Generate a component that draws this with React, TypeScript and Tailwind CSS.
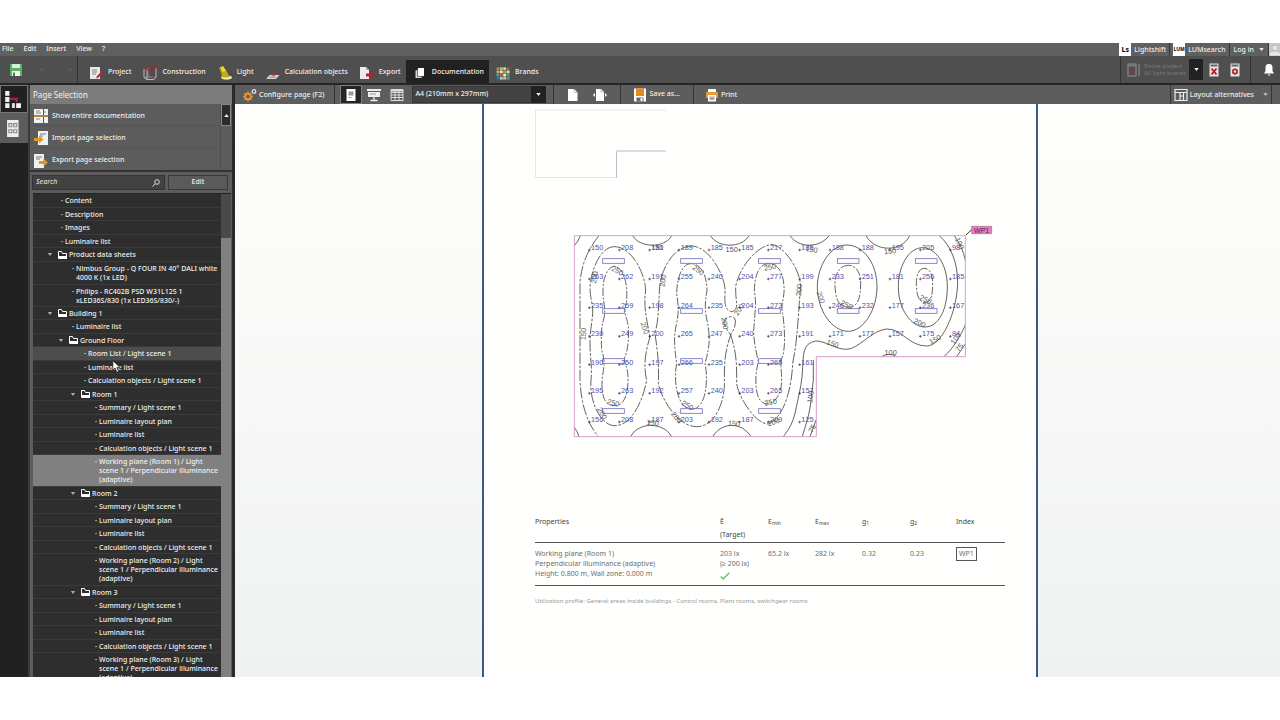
import type { ReactNode } from "react";
import { clsx } from "clsx";

interface TreeRow {
  label: string;
  level: number;
  folder?: boolean;
  lines?: 2 | 3;
  state?: "hover" | "selected";
}

const roomRows = (n: number, selected = false): TreeRow[] => [
  { label: `Room ${n}`, level: 3, folder: true },
  { label: "Summary / Light scene 1", level: 4 },
  { label: "Luminaire layout plan", level: 4 },
  { label: "Luminaire list", level: 4 },
  { label: "Calculation objects / Light scene 1", level: 4 },
  {
    label: `Working plane (Room ${n}) / Light scene 1 / Perpendicular illuminance (adaptive)`,
    level: 4,
    lines: 3,
    state: selected ? "selected" : undefined,
  },
];

const tree: TreeRow[] = [
  { label: "Content", level: 1 },
  { label: "Description", level: 1 },
  { label: "Images", level: 1 },
  { label: "Luminaire list", level: 1 },
  { label: "Product data sheets", level: 1, folder: true },
  { label: "Nimbus Group - Q FOUR IN 40° DALI white 4000 K (1x LED)", level: 2, lines: 2 },
  { label: "Philips - RC402B PSD W31L125 1 xLED36S/830 (1x LED36S/830/-)", level: 2, lines: 2 },
  { label: "Building 1", level: 1, folder: true },
  { label: "Luminaire list", level: 2 },
  { label: "Ground Floor", level: 2, folder: true },
  { label: "Room List / Light scene 1", level: 3, state: "hover" },
  { label: "Luminaire list", level: 3 },
  { label: "Calculation objects / Light scene 1", level: 3 },
  ...roomRows(1, true),
  ...roomRows(2),
  ...roomRows(3),
];

const leafIndent: Record<number, string> = {
  1: "pl-[28px]",
  2: "pl-[39px]",
  3: "pl-[51px]",
  4: "pl-[62px]",
};

const folderIndent: Record<number, string> = {
  1: "pl-[14px]",
  2: "pl-[25px]",
  3: "pl-[37px]",
};

const rowHeight = { 1: "h-[14px] even:h-[13px]", 2: "h-[22px] even:h-[23px]", 3: "h-[32px]" };

function Icon({ children, className = "h-[14px] w-[14px]" }: { children: ReactNode; className?: string }) {
  return (
    <svg viewBox="0 0 14 14" className={clsx("shrink-0", className)} aria-hidden="true">
      {children}
    </svg>
  );
}

function ArrowDown({ className = "w-[5px]" }: { className?: string }) {
  return (
    <svg viewBox="0 0 6 4" className={clsx("h-[3px] shrink-0", className)} aria-hidden="true">
      <path d="M0 0h6L3 4z" fill="currentColor" />
    </svg>
  );
}

function Divider() {
  return <span className="w-px self-stretch bg-[#333]" />;
}

const ProjectIcon = () => (
  <Icon>
    <path d="M1 1h10v12H1z" fill="#e9e9e9" />
    <path d="M3 4h5M3 6h5M3 8h4" stroke="#777" strokeWidth=".9" />
    <path d="M13.500 4.500 8 10l-1 2.500 2.500-1L14 7z" fill="#c0202e" />
  </Icon>
);

const ConstructionIcon = () => (
  <Icon>
    <path d="M1 2.500v9l3 2V4.500zM4 13.500h7l2-2.500V2" fill="none" stroke="#c9c9c9" strokeWidth=".9" />
    <path d="M5 2v9h8M1 11.500 5 11" fill="none" stroke="#a5a5a5" strokeWidth=".7" />
    <path d="M1 2.500 5 1h8l-2.500 3H4zM10.500 4v9" fill="none" stroke="#b0202c" strokeWidth="1.100" />
  </Icon>
);

const LightIcon = () => (
  <Icon>
    <ellipse cx="8.500" cy="11.500" rx="5.500" ry="2" fill="#fbf5ba" />
    <path d="M3 6 8 4l4 7.500H4z" fill="#bfae18" />
    <path d="M1 2 5 0l3 4.500-5 2.500z" fill="#e6dc25" />
    <path d="m1 2 2 5 1-.5L2 1.500z" fill="#777112" />
  </Icon>
);

const CalculationIcon = () => (
  <Icon>
    <path d="M3.500 9h10L10 13H0z" fill="#cfcfcf" />
    <path d="M4 11h6" stroke="#8d8d8d" />
    <path d="M7.500 2v7M5.500 7.500l2 2 2-2" fill="none" stroke="#b22633" strokeWidth="1.200" />
  </Icon>
);

const ExportIcon = () => (
  <Icon>
    <path d="M0 1h6l3 3v9H0z" fill="#ececec" />
    <path d="M6 1v3h3" fill="#aaa" />
    <path d="M6 7.500h3.500V5l4.500 4-4.500 4v-2.500H6z" fill="#bb1c2b" />
  </Icon>
);

const DocumentationIcon = () => (
  <Icon>
    <path d="M5 2h6v8H5z" fill="#fff" />
    <path d="M2.500 4.500 4.500 4v6.500h4V12h-6z" fill="#d8d8d8" />
    <path d="M4.700 2v8.400h6" fill="none" stroke="#777" strokeWidth=".5" />
  </Icon>
);

const brandColors = [
  "#8b8b8b", "#b8c460", "#d8cf9a", "#cf4d3c",
  "#e2a33a", "#f0e6b5", "#6eb3a4", "#eee08d",
  "#4aa3c7", "#d15a45", "#f3f0d8", "#5e9e6a",
  "#3a6f9f", "#9bd0df", "#e3bf36", "#3fa7b4",
];

const BrandsIcon = () => (
  <Icon>
    <path d="M0 1h14v13H0z" fill="#444" />
    {brandColors.map((c, i) => (
      <rect key={c} x={0.4 + (i % 4) * 3.4} y={1.3 + Math.floor(i / 4) * 3.2} width="3" height="2.800" fill={c} />
    ))}
  </Icon>
);

const modes = [
  { label: "Project", icon: <ProjectIcon /> },
  { label: "Construction", icon: <ConstructionIcon /> },
  { label: "Light", icon: <LightIcon /> },
  { label: "Calculation objects", icon: <CalculationIcon /> },
  { label: "Export", icon: <ExportIcon /> },
  { label: "Documentation", icon: <DocumentationIcon />, active: true },
  { label: "Brands", icon: <BrandsIcon /> },
];

function MenuBar() {
  return (
    <div className="flex h-[13px] items-stretch justify-between bg-[#606060] text-[7px] leading-[11px] font-medium">
      <nav className="flex gap-[10px] pl-[2px]">
        {["File", "Edit", "Insert", "View", "?"].map((m) => (
          <button key={m} className="pb-[2px]">{m}</button>
        ))}
      </nav>
      <div className="flex items-stretch">
        <button className="flex items-center gap-[3px] pr-[3px]">
          <span className="flex h-full w-[12px] items-center justify-center bg-white font-bold text-black">Ls</span>
          Lightshift
        </button>
        <Divider />
        <button className="flex items-center gap-[3px] px-[3px]">
          <span className="flex h-full w-[12px] items-center justify-center bg-white text-[5px] font-bold text-black">LUM</span>
          LUMsearch
        </button>
        <Divider />
        <button className="flex items-center gap-[5px] px-[4px]">
          Log in
          <ArrowDown />
        </button>
        <Divider />
        <button aria-label="Account" className="w-[11px] bg-[#c9c9c9]">
          <svg viewBox="0 0 11 13" className="h-[13px] w-[11px]">
            <circle cx="6" cy="5" r="3" fill="#e6e6e6" stroke="#aaa" strokeWidth=".6" />
            <path d="M0 13c0-4 3-5 6-5s6 1 6 5z" fill="#e6e6e6" stroke="#aaa" strokeWidth=".6" />
          </svg>
        </button>
      </div>
    </div>
  );
}

function ModeBar() {
  return (
    <div className="flex h-[29px] items-stretch border-b-2 border-[#252525] bg-[#4f4f4f] text-[7px]">
      <div className="flex w-[78px] items-center gap-[16px] border-r border-[#333] pl-[9px]">
        <button aria-label="Save">
          <Icon>
            <path d="M1 1h12v12H1z" fill="#57b35f" />
            <path d="M3 1h8v4H3z" fill="#d9efdb" />
            <path d="M3 8h8v5H3z" fill="#f4f4f4" />
            <path d="M4 9.500h2V13H4z" fill="#4b7c50" />
          </Icon>
        </button>
        <button aria-label="Undo" className="text-[#4b6350]">
          <svg viewBox="0 0 6 6" className="h-[5px] w-[5px]"><path d="M0 3 4 0v2h2v2H4v2z" fill="currentColor" /></svg>
        </button>
        <button aria-label="Redo" className="ml-[8px] text-[#4b6350]">
          <svg viewBox="0 0 6 6" className="h-[5px] w-[5px]"><path d="M6 3 2 0v2H0v2h2v2z" fill="currentColor" /></svg>
        </button>
      </div>
      <nav className="flex items-stretch pt-[4px] pl-[4px]">
        {modes.map((m) => (
          <button
            key={m.label}
            className={clsx("flex items-center gap-[5px] pt-[2px] pr-[5px] pl-[7px] font-medium", m.active && "bg-[#212121]")}
          >
            {m.icon}
            {m.label}
          </button>
        ))}
      </nav>
      <div className="ml-auto flex items-stretch border-l border-[#333]">
        <button className="flex items-center gap-[3px] pr-[3px] pl-[6px] text-left text-[6px] leading-[7px] text-[#7b7b7b]">
          <Icon>
            <path d="M1 1h8v12H1zM12 1v12" fill="none" stroke="#7d7d7d" strokeWidth="1.500" />
            <path d="M1 2.500h8" stroke="#7d7d7d" strokeWidth="2" />
            <path d="m3.500 5 4 3-4 3z" fill="#7a3d43" />
          </Icon>
          <span>Entire project<br />All light scenes</span>
        </button>
        <button aria-label="Calculation options" className="my-[3px] flex w-[14px] items-center justify-center bg-[#222]">
          <ArrowDown />
        </button>
        <button aria-label="Delete results" className="pl-[4px]">
          <Icon>
            <path d="M2.500.5h9v13h-9z" fill="#e4e4e4" />
            <path d="M3.500 1.500h7v2h-7z" fill="#56716e" />
            <path d="m4.500 5.500 5 6M9.500 5.500l-5 6" stroke="#bd1830" strokeWidth="1.900" />
          </Icon>
        </button>
        <button aria-label="Calculation settings" className="pr-[8px] pl-[7px]">
          <Icon>
            <path d="M2.500.5h9v13h-9z" fill="#e4e4e4" />
            <path d="M3.500 1.500h7v2h-7z" fill="#56716e" />
            <circle cx="7" cy="8.500" r="2" fill="none" stroke="#bd1830" strokeWidth="1.700" />
            <path d="M7 5v7M4 6.800l6 3.400M10 6.800l-6 3.400" stroke="#bd1830" strokeWidth="1" />
            <circle cx="7" cy="8.500" r="1.200" fill="#e4e4e4" />
          </Icon>
        </button>
        <Divider />
        <button aria-label="Notifications" className="pr-[4px] pl-[11px]">
          <Icon>
            <path d="M7 1c3 0 3.500 2 3.500 4v3l1.500 2.500H2L3.500 8V5C3.500 3 4 1 7 1z" fill="#fff" />
            <path d="M5.500 11.500h3L7 13z" fill="#fff" />
          </Icon>
        </button>
      </div>
    </div>
  );
}

const actions = [
  {
    label: "Show entire documentation",
    icon: (
      <>
        <path d="M0 0h9v6H0zM10 0h4v6h-4zM0 8h9v6H0zM10 8h4v6h-4z" fill="#f1f1f1" />
        <path d="M2 2h4M2 4h5M2 10h4M11 2v2" stroke="#888" />
        <path d="M0 7h14" stroke="#dc9a2c" strokeWidth="1.300" />
      </>
    ),
  },
  {
    label: "Import page selection",
    icon: (
      <>
        <path d="M4 0h10v14H4z" fill="#f1f1f1" />
        <path d="M6 3h6M6 5h3" stroke="#777" />
        <path d="M0 7h5V4.500L9.500 8.500 5 12.500V10H0z" fill="#e2951f" />
      </>
    ),
  },
  {
    label: "Export page selection",
    icon: (
      <>
        <path d="M0 0h10v14H0z" fill="#f1f1f1" />
        <path d="M2 3h6M2 5h4" stroke="#777" />
        <path d="M5 7h4.500V4.500L14 8.500 9.500 12.500V10H5z" fill="#e2951f" />
      </>
    ),
  },
];

function TreeItem({ row }: { row: TreeRow }) {
  return (
    <li
      className={clsx(
        "flex shrink-0 items-center border-b border-[#3b3b3b]",
        rowHeight[row.lines ?? 1],
        row.folder ? folderIndent[row.level] : leafIndent[row.level],
        row.state === "hover" && "bg-[#4d4d4d]",
        row.state === "selected" && "bg-[#808080]",
      )}
    >
      {row.folder ? (
        <button className="flex items-center">
          <ArrowDown className="mr-[5px] w-[6px] text-[#aaa]" />
          <svg viewBox="0 0 9 8" className="mr-[2px] h-[8px] w-[9px]" aria-hidden="true">
            <path d="M.5 7.500v-7h3l1 2h4v5z" fill="none" stroke="#fff" />
            <path d="M1 5h8v3H1z" fill="#fff" />
          </svg>
          {row.label}
        </button>
      ) : (
        <a href="#page" className="flex">
          <span className="w-[4px] shrink-0 font-bold">·</span>
          <span>{row.label}</span>
        </a>
      )}
    </li>
  );
}

function Sidebar() {
  return (
    <aside className="flex w-[205px] shrink-0 flex-col border-r-[3px] border-[#2a2a2a] bg-[#5c5c5c] text-[7px] font-medium">
      <h2 className="flex h-[19px] shrink-0 items-center bg-[#7c7c7c] pl-[3px] text-[8px] font-normal">Page Selection</h2>
      <div className="flex h-[68px] shrink-0 border-b-2 border-[#333]">
        <div className="flex-1">
          {actions.map((a) => (
            <button key={a.label} className="flex h-[22px] w-full items-center gap-[4px] border-b border-[#545454] pt-[3px] pl-[4px] last:border-b-0">
              <Icon>{a.icon}</Icon>
              {a.label}
            </button>
          ))}
        </div>
        <div className="mr-px w-[11px] border-l border-[#505050]">
          <button aria-label="Scroll up" className="flex h-[22px] w-full items-center justify-center border border-[#888] bg-[#2b2b2b]">
            <ArrowDown className="w-[5px] rotate-180" />
          </button>
        </div>
      </div>
      <div className="flex h-[21px] shrink-0 items-center gap-[3px] px-[2px]">
        <div className="flex h-[15px] flex-1 items-center border border-[#333] bg-[#424242] pr-[4px]">
          <input aria-label="Search" placeholder="Search" className="min-w-0 flex-1 bg-transparent pl-[3px] italic outline-none placeholder:text-[#ddd]" />
          <svg viewBox="0 0 8 8" className="h-[8px] w-[8px]" fill="none" stroke="#ddd" aria-hidden="true">
            <circle cx="5" cy="3" r="2.300" />
            <path d="M3.300 4.700.5 7.500" />
          </svg>
        </div>
        <button className="mr-[2px] h-[15px] w-[60px] border border-[#3a3a3a] bg-[#5a5a5a]">Edit</button>
      </div>
      <div className="mr-px ml-[3px] flex min-h-0 flex-1 border-t border-[#222] bg-[#2e2e2e]">
        <ul className="flex min-w-0 flex-1 flex-col overflow-hidden leading-[9px]">
          {tree.map((row, i) => (
            <TreeItem key={i} row={row} />
          ))}
        </ul>
        <div className="flex w-[10px] flex-col bg-[#4a4a4a]">
          <div className="mt-[44px] flex-1 bg-[#808080]" />
        </div>
      </div>
    </aside>
  );
}

function PageBar() {
  return (
    <div className="flex h-[19px] shrink-0 items-stretch bg-[#5d5d5d] text-[7px] font-medium">
      <button className="flex items-center gap-[2px] pr-[10px] pl-[8px] pt-px">
        <Icon>
          <circle cx="5" cy="8.500" r="2.800" fill="none" stroke="#e5952b" strokeWidth="2" />
          <path d="M5 3.500v2M5 11.500v2M0 8.500h2M8 8.500h2M1.500 5l1.500 1.500M7 10.500l1.500 1.500M8.500 5 7 6.500M3 10.500 1.500 12" stroke="#e5952b" strokeWidth="1.500" />
          <circle cx="11" cy="3.500" r="1.800" fill="none" stroke="#ddd" strokeWidth="1.300" />
        </Icon>
        Configure page (F2)
      </button>
      <Divider />
      <button aria-label="Page view" className="ml-[5px] flex w-[22px] items-center justify-center border border-[#808080] bg-[#252525]">
        <Icon>
          <path d="M2.500 1h9v12h-9z" fill="#fff" />
          <path d="M4.500 3.500h5v4h-5zM4.500 9h3v1h-3z" fill="#999" />
        </Icon>
      </button>
      <button aria-label="Presentation view" className="w-[23px] pl-[5px]">
        <Icon>
          <path d="M0 1h14v2H0zM1 4h12v5H1z" fill="#eee" />
          <path d="M3 6h6" stroke="#999" />
          <path d="M7 9v3M3.500 12.500h7" stroke="#eee" strokeWidth="1.300" />
        </Icon>
      </button>
      <button aria-label="Table view" className="w-[27px] pl-[5px]">
        <Icon>
          <path d="M1 1.500h12v11H1zM1 4.500h12M1 7h12M1 9.500h12M5 1.500v11M9 1.500v11" fill="none" stroke="#ddd" />
          <path d="M1 1.500h12v2H1z" fill="#ddd" />
        </Icon>
      </button>
      <div className="relative my-px flex w-[134px]">
        <select aria-label="Page size" className="w-full appearance-none border border-[#383838] bg-[#434343] pl-[2px] outline-none">
          <option>A4 (210mm x 297mm)</option>
        </select>
        <span className="pointer-events-none absolute inset-y-0 right-0 flex w-[15px] items-center justify-center bg-[#222]">
          <ArrowDown />
        </span>
      </div>
      <span className="w-[7px]" />
      <Divider />
      <button aria-label="Single page" className="pl-[12px]">
        <Icon>
          <path d="M2 1h6l3.500 3.500V13H2z" fill="#fff" />
          <path d="M8 1v3.500h3.500" fill="none" stroke="#aaa" strokeWidth=".7" />
        </Icon>
      </button>
      <button aria-label="Fit page" className="px-[13px]">
        <Icon>
          <path d="M3 1h5l3 3v9H3z" fill="#fff" />
          <path d="M8 1v3h3" fill="none" stroke="#aaa" strokeWidth=".7" />
          <path d="M2 5v4L0 7zM12 5v4l2-2z" fill="#fff" />
        </Icon>
      </button>
      <Divider />
      <button className="flex items-center gap-[2px] pr-[13px] pl-[12px]">
        <Icon>
          <path d="M1 .5h12v13H1z" fill="#fff" />
          <path d="M3 .5h8v7.500H3z" fill="#e58a1f" />
          <path d="M3.500 9.500h7v4h-7z" fill="#666" />
          <path d="M7.500 10h2v3h-2z" fill="#fff" />
        </Icon>
        Save as...
      </button>
      <Divider />
      <button className="flex items-center gap-[2px] pl-[11px] pt-px">
        <Icon>
          <path d="M3 1h8v3H3z" fill="#fff" />
          <path d="M1 4h12v6H1z" fill="#e59a35" />
          <path d="M3 7h8v6.500H3z" fill="#fff" />
          <path d="M4.500 8.500h5v3.500h-5z" fill="#aaa" />
        </Icon>
        Print
      </button>
      <div className="ml-auto flex">
        <Divider />
        <button className="flex items-center gap-[2px] pl-[3px] pt-px">
          <Icon>
            <path d="M1 1.500h12v11H1zM1 4.500h12M6 4.500v8M9.500 4.500v8M6 8h3.500" fill="none" stroke="#eee" strokeWidth="1.200" />
          </Icon>
          Layout alternatives
        </button>
        <button aria-label="More layouts" className="mr-px ml-[6px] w-[10px] text-[#bbb]">
          <ArrowDown className="mx-auto w-[5px]" />
        </button>
        <Divider />
        <span className="w-[8px]" />
      </div>
    </div>
  );
}

// Plan drawing, three units per pixel
const contours = [
  "M102 47Q50 110 45 190V480Q50 590 100 650",
  "M46 47Q40 65 28 77M28 622Q38 635 42 650",
  "M203 47C225 85 300 85 320 47M436 47C460 85 530 85 552 47M675 47C700 85 765 85 792 47M903 47C930 97 1010 97 1034 47",
  "M197 650C220 605 295 605 320 650M443 650C470 605 530 605 558 650M950 410Q972 396 995 410",
  "M148 80C110 80 80 140 75 200C75 240 85 250 83 280C80 320 75 330 75 370C75 420 82 430 78 480C72 540 105 617 150 617C200 617 235 540 245 480C235 440 240 400 255 350C245 300 235 260 242 210C240 160 200 80 148 80",
  "M380 78C330 78 290 140 284 200C280 250 283 290 270 340C275 380 283 420 280 490C290 540 340 620 395 620C450 620 475 550 478 500C478 430 478 400 497 345C480 320 465 300 490 292C505 285 515 295 510 315C508 330 500 335 497 345C515 400 515 430 515 490C520 530 570 612 610 612C660 590 680 500 683 430C700 350 700 260 707 200C705 140 650 75 620 73C570 80 520 150 512 200C510 240 525 270 500 275C475 270 480 240 480 210C480 170 435 80 380 78",
  "M1123 47C1160 80 1178 130 1178 190C1175 280 1130 378 1085 378C1030 378 1010 325 965 327C920 330 880 388 845 388C810 388 780 362 752 363C715 370 715 400 713 440C712 490 700 530 690 580C680 620 665 635 655 650",
  "M845 75C795 75 757 140 757 200C757 270 800 334 850 334C895 334 936 270 936 200C936 130 895 75 845 75",
  "M1073 83C1030 83 1000 140 1000 200C1000 270 1040 321 1080 321C1120 321 1147 270 1147 200C1147 130 1110 83 1073 83",
  "M745 420V480L738 540C735 580 720 620 712 650M735 650L753 600",
  "M1137 410C1165 385 1185 350 1201 315M1175 410L1201 372M1168 47Q1192 80 1201 120",
];

const innerContours = [
  "M150 139C125 139 112 180 114 220C115 250 122 262 118 290C108 320 108 350 110 390C120 420 118 440 112 470C108 520 115 557 148 557C180 557 190 520 189 470C188 440 178 430 178 415C190 390 192 350 190 320C185 290 178 285 180 265C190 240 190 150 150 139",
  "M378 131C345 131 335 190 335 220C340 260 342 270 335 310C325 350 328 380 335 430C325 480 335 565 380 568C425 565 430 480 420 430C435 380 435 350 428 310C418 270 420 250 426 210C425 160 405 131 378 131",
  "M612 131C580 131 568 170 568 215C575 250 570 270 567 320C562 350 575 400 580 425C568 470 570 530 590 545C610 565 650 540 650 480C650 450 645 440 650 415C662 390 660 330 653 280C645 260 660 230 657 200C655 160 640 131 612 131",
  "M850 136C825 136 810 160 810 190C810 230 818 262 850 262C880 262 887 230 887 190C887 160 875 136 850 136",
  "M1078 145C1062 145 1054 165 1054 190C1054 225 1062 248 1080 248C1098 248 1103 225 1103 190C1103 165 1095 145 1078 145",
];

const columns = [73, 163, 254, 342, 432, 524, 610, 704, 795, 885, 975, 1066, 1156];

const readings = [
  ["150", "208", "181", "189", "185", "185", "217", "185", "188", "188", "195", "205", "98"],
  ["263", "262", "191", "255", "240", "204", "277", "199", "233", "251", "181", "256", "185"],
  ["235", "259", "198", "264", "235", "204", "273", "193", "246", "232", "177", "236", "167"],
  ["230", "249", "200", "265", "247", "240", "273", "191", "171", "177", "157", "175", "84"],
  ["190", "250", "197", "266", "235", "203", "265", "161"],
  ["195", "263", "192", "257", "240", "203", "265", "157"],
  ["156", "208", "187", "203", "192", "187", "209", "125"],
];

const rowY = [90, 177, 263, 349, 434, 520, 606];

const luminaires = [
  ...[113, 347, 581].flatMap((x) => [116, 266, 416, 566].map((y) => [x, y])),
  ...[817, 1051].flatMap((x) => [116, 266].map((y) => [x, y])),
];

const contourLabels: [string, number, number, number][] = [
  ["250", 158, 152, 30], ["200", 88, 172, -80], ["200", 240, 324, 72], ["150", 55, 342, -86],
  ["250", 145, 548, 15], ["200", 112, 580, 60], ["250", 400, 150, 35], ["200", 293, 182, -82],
  ["250", 368, 556, 30], ["200", 335, 592, 50], ["250", 615, 141, -10], ["200", 522, 268, -55],
  ["200", 480, 310, 80], ["250", 617, 546, -10], ["200", 702, 210, -85], ["150", 263, 608, 5],
  ["150", 507, 610, 5], ["150", 500, 88, 0], ["150", 277, 82, 0], ["200", 768, 232, 72],
  ["250", 845, 254, 25], ["150", 803, 370, 18], ["150", 740, 88, 8], ["150", 975, 93, -5],
  ["250", 1082, 238, 25], ["200", 1064, 308, 25], ["150", 1110, 358, -28], ["100", 977, 396, 0],
  ["100", 1172, 355, -55], ["75", 1183, 382, -50], ["100", 1184, 70, 65], ["100", 736, 530, -80],
  ["75", 741, 625, -60], ["200", 625, 606, -20],
];

function IsolinePlan() {
  return (
    <svg viewBox="0 0 1305 675" className="block h-[225px] w-[435px]" fontFamily="'Liberation Sans', sans-serif">
      <g fill="none" stroke="#4a4a4a" strokeWidth="2.600">
        {contours.map((d, i) => (
          <path key={d} d={d} strokeDasharray={i === 0 || i === 4 || i === 5 ? "34 5 8 5" : undefined} />
        ))}
        {innerContours.map((d) => (
          <path key={d} d={d} strokeDasharray="24 5 6 5" />
        ))}
      </g>
      <path d="M28 47H1201V410H754V650H28Z" fill="none" stroke="#d59fd0" strokeWidth="3" />
      <g fill="none" stroke="#7a74c6" strokeWidth="2.600">
        {luminaires.map(([x, y]) => (
          <rect key={`${x}-${y}`} x={x} y={y} width="65" height="14" />
        ))}
      </g>
      <g fill="#544fac" fontSize="22">
        {readings.map((row, r) =>
          row.map((value, c) => (
            <g key={`${r}-${c}`}>
              <path d={`M${columns[c] - 4} ${rowY[r]}h8m-4-4v8`} stroke="#2e2a5c" strokeWidth="2" />
              <text x={columns[c] + 5} y={rowY[r]}>{value}</text>
            </g>
          )),
        )}
      </g>
      <g fill="#555" fontSize="22" textAnchor="middle">
        {contourLabels.map(([text, x, y, angle]) => (
          <text key={`${x}-${y}`} x={x} y={y + 8} transform={`rotate(${angle} ${x} ${y})`}>{text}</text>
        ))}
      </g>
      <path d="m1203 45 18-17" stroke="#333" strokeWidth="3" />
      <path d="M1220 19h60v22h-60z" fill="#ea7fc0" stroke="#a95f8c" strokeWidth="2" />
      <text x="1250" y="38" fontSize="21" fill="#5b1f48" textAnchor="middle">WP1</text>
    </svg>
  );
}

function ResultTable() {
  return (
    <table className="mt-[70px] w-full table-fixed border-b border-[#555] text-left text-[7px] text-[#6d6d6d]">
      <colgroup>
        <col />
        <col className="w-[48px]" />
        <col className="w-[47px]" />
        <col className="w-[47px]" />
        <col className="w-[48px]" />
        <col className="w-[46px]" />
        <col className="w-[49px]" />
      </colgroup>
      <thead className="border-b border-[#555] align-top leading-[13px] text-[#444]">
        <tr>
          <th className="h-[27px] p-0 font-normal">Properties</th>
          <th className="p-0 font-normal">Ē<br />(Target)</th>
          <th className="p-0 font-normal">E<sub className="text-[5px]">min</sub></th>
          <th className="p-0 font-normal">E<sub className="text-[5px]">max</sub></th>
          <th className="p-0 font-normal">g<sub className="text-[5px]">1</sub></th>
          <th className="p-0 font-normal">g<sub className="text-[5px]">2</sub></th>
          <th className="p-0 font-normal">Index</th>
        </tr>
      </thead>
      <tbody className="align-top leading-[10px]">
        <tr>
          <td className="h-[43px] p-0 pt-[6px]">
            Working plane (Room 1)<br />Perpendicular illuminance (adaptive)<br />Height: 0.800 m, Wall zone: 0.000 m
          </td>
          <td className="p-0 pt-[6px]">
            203 lx<br />(≥ 200 lx)
            <svg viewBox="0 0 10 8" className="mt-[3px] h-[8px] w-[10px]" role="img" aria-label="Passed">
              <path d="m.7 4.500 2.500 2.500L9.300.8" fill="none" stroke="#58c763" strokeWidth="1.400" />
            </svg>
          </td>
          <td className="p-0 pt-[6px]">65.2 lx</td>
          <td className="p-0 pt-[6px]">282 lx</td>
          <td className="p-0 pt-[6px]">0.32</td>
          <td className="p-0 pt-[6px]">0.23</td>
          <td className="p-0 pt-[4px]">
            <span className="inline-block border border-[#555] px-[2px] leading-[12px]">WP1</span>
          </td>
        </tr>
      </tbody>
    </table>
  );
}

function Sheet() {
  return (
    <article className="w-[556px] border-x-2 border-[#3b5a8c] bg-[#fffffe] pr-[31px] pl-[51px]">
      <svg viewBox="0 0 132 70" className="mt-[5px] block h-[70px] w-[132px]" fill="none" aria-hidden="true">
        <path d="M131 1H.5v67.500h81" stroke="#e6e6ec" />
        <path d="M81.500 69V42H131" stroke="#bdbccb" />
      </svg>
      <div className="mt-[41px] ml-[30px]">
        <IsolinePlan />
      </div>
      <ResultTable />
      <p className="mt-[10px] text-[6px] leading-[10px] text-[#9a9a9a]">
        Utilization profile: General areas inside buildings - Control rooms, Plant rooms, switchgear rooms
      </p>
    </article>
  );
}

export default function App() {
  return (
    <div className="flex h-screen flex-col bg-white py-[43px] font-['Noto_Sans',sans-serif]">
      <div className="flex min-h-0 flex-1 flex-col overflow-hidden text-[#f0f0f0]">
        <MenuBar />
        <ModeBar />
        <div className="flex min-h-0 flex-1">
          <div className="flex w-[30px] shrink-0 flex-col border-r-2 border-[#3a3a3a] bg-[#212121]">
            <button aria-label="Page selection" className="flex h-[28px] items-center justify-center border border-[#777] pr-[3px]">
              <Icon className="h-[17px] w-[17px]">
                <path d="M1 0h3.500v4H1zM1 5h3.500v4H1zM1 10h3.500v4H1zM10 10h4v4h-4z" fill="#f2f2f2" />
                <path d="M5 6.500h5.500V9" fill="none" stroke="#b51f30" strokeWidth="1.800" />
                <path d="M6.500 10h2.500v4H6.500z" fill="#ddd" />
              </Icon>
            </button>
            <button aria-label="Layouts" className="flex h-[30px] items-center justify-center bg-[#5c5c5c] pr-[3px]">
              <Icon className="h-[17px] w-[17px]">
                <path d="M2.500 0h9.500v14H2.500z" fill="#eee" />
                <path d="M4 3h2.500v2.500H4zM8 3h2.500v2.500H8zM4 8h2.500v2.500H4zM8 8h2.500v2.500H8z" fill="none" stroke="#888" strokeWidth=".9" />
              </Icon>
            </button>
          </div>
          <Sidebar />
          <div className="flex min-w-0 flex-1 flex-col">
            <PageBar />
            <main id="page" className="flex min-h-0 flex-1 justify-center overflow-hidden bg-linear-to-b from-[#fefffc] to-[#f0f2f2] pl-[5px]">
              <Sheet />
            </main>
          </div>
        </div>
      </div>
      <svg viewBox="0 0 12 18" className="pointer-events-none absolute top-[360px] left-[112px] h-[13px] w-[9px]" aria-hidden="true">
        <path d="M1 1v13l3-3 2.500 6 2.500-1-2.500-5.500H11z" fill="#fff" stroke="#222" />
      </svg>
    </div>
  );
}
